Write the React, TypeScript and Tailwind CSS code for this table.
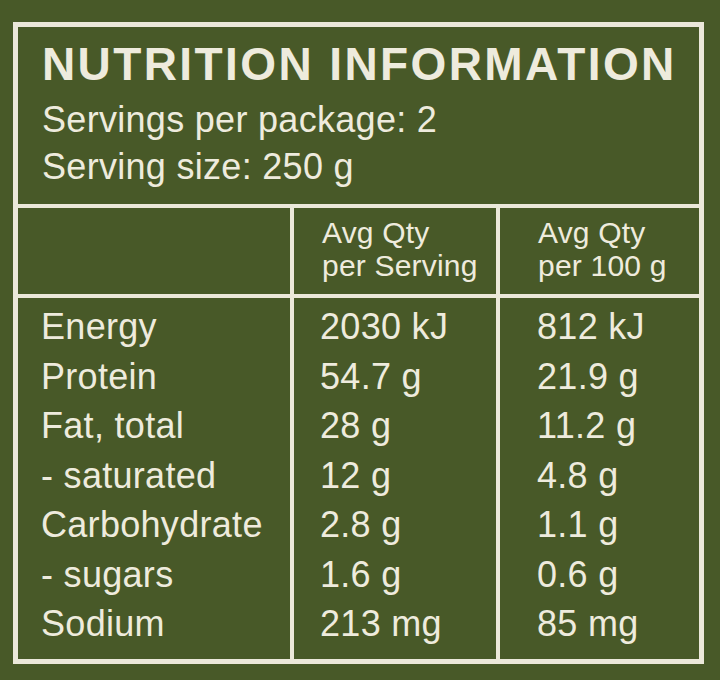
const ROWS = [
  { name: "Energy", serving: "2030 kJ", per100: "812 kJ" },
  { name: "Protein", serving: "54.7 g", per100: "21.9 g" },
  { name: "Fat, total", serving: "28 g", per100: "11.2 g" },
  { name: "- saturated", serving: "12 g", per100: "4.8 g" },
  { name: "Carbohydrate", serving: "2.8 g", per100: "1.1 g" },
  { name: "- sugars", serving: "1.6 g", per100: "0.6 g" },
  { name: "Sodium", serving: "213 mg", per100: "85 mg" },
];

export default function App() {
  return (
    <div
      className="w-[720px] h-[680px] bg-[#485928] text-[#eeebdd] pt-[22px] pl-[13px]"
      style={{ fontFamily: '"Liberation Sans", Arial, sans-serif' }}
    >
      <div className="w-[691px] border-[5px] border-[#ebe8da]">
        {/* heading block */}
        <div className="pt-[14px] pb-[14px] pl-[24px] border-b-4 border-[#ebe8da]">
          <h1 className="text-[46px] leading-[46px] font-bold tracking-[2.4px]">
            NUTRITION INFORMATION
          </h1>
          <div className="mt-[9px] text-[36px] leading-[47px] tracking-[0.3px]">
            <p>Servings per package: 2</p>
            <p>Serving size: 250 g</p>
          </div>
        </div>

        {/* table */}
        <div className="grid grid-cols-[276px_206px_1fr]">
          <div className="border-r-4 border-b-4 border-[#ebe8da] h-[90px]" />
          <div className="border-r-4 border-b-4 border-[#ebe8da] pl-[28px] pt-[8px] text-[30px] leading-[33px] tracking-[0.2px]">
            <p>Avg Qty</p>
            <p>per Serving</p>
          </div>
          <div className="border-b-4 border-[#ebe8da] pl-[38px] pt-[8px] text-[30px] leading-[33px] tracking-[0.2px]">
            <p>Avg Qty</p>
            <p>per 100 g</p>
          </div>

          <div className="border-r-4 border-[#ebe8da] pl-[23px] pt-[4px] pb-[10px] text-[36px] leading-[49.5px] tracking-[0.3px]">
            {ROWS.map((r) => (
              <p key={r.name}>{r.name}</p>
            ))}
          </div>
          <div className="border-r-4 border-[#ebe8da] pl-[26px] pt-[4px] pb-[10px] text-[36px] leading-[49.5px] tracking-[0.3px]">
            {ROWS.map((r) => (
              <p key={r.name}>{r.serving}</p>
            ))}
          </div>
          <div className="pl-[37px] pt-[4px] pb-[10px] text-[36px] leading-[49.5px] tracking-[0.3px]">
            {ROWS.map((r) => (
              <p key={r.name}>{r.per100}</p>
            ))}
          </div>
        </div>
      </div>
    </div>
  );
}
